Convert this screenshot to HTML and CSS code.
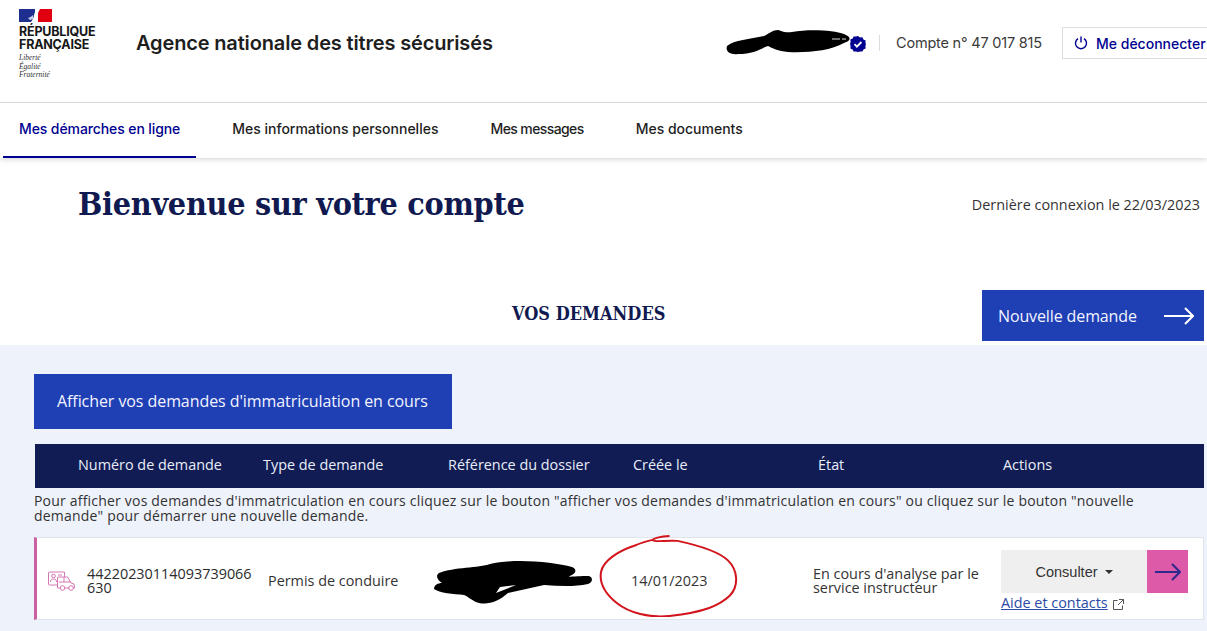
FILE: index.html
```html
<!DOCTYPE html>
<html lang="fr">
<head>
<meta charset="utf-8">
<title>Agence nationale des titres sécurisés</title>
<link rel="stylesheet" href="styles.css">
</head>
<body>
<header class="top">
  <div class="brand">
    <svg class="flag" width="33" height="13" viewBox="0 0 33 13"><rect width="33" height="13" fill="#fff"/><rect width="16" height="13" fill="#1f2f8f"/><path d="M19 13V0h14v13z" fill="#e1000f"/><path d="M12 13c2-3 3-5 3-7l2-6h4l-2 4-1 4-1 5z" fill="#fff"/><path d="M9 9c2-1 3-1 5-3v4l-3 1z" fill="#c9cfe8"/></svg>
    <div class="rf">RÉPUBLIQUE<br>FRANÇAISE</div>
    <div class="devise">Liberté<br>Égalité<br>Fraternité</div>
  </div>
  <div class="agency">Agence nationale des titres sécurisés</div>
  <div class="user">
    <div class="name">
      <svg class="scrib" width="128" height="26" viewBox="0 0 128 26"><path d="M1 17C8 11 24 10 38 7 44 4 47 1 52 1 56 2 58 4 66 3 82 0 108 1 118 5 125 8 126 11 118 14 104 22 80 24 62 23 52 22 46 19 42 17 36 19 28 25 12 25 5 26 -1 23 1 17z" fill="#000"/><path d="M106 10h8M116 10h4" stroke="#ddd" stroke-width="1"/></svg>
      <svg class="check" width="16" height="16" viewBox="0 0 16 16"><path d="M8 0l2 1.400 2.400-.2 1 2.200 2.200 1-.2 2.400L16 8l-.6 2 .2 2.400-2.200 1-1 2.200-2.400-.2L8 16l-2-.6-2.400.2-1-2.200-2.200-1 .2-2.400L0 8l.6-2-.2-2.400 2.200-1 1-2.200 2.400.2z" fill="#000091"/><path d="M4.500 8.200l2.400 2.400 4.500-4.600" fill="none" stroke="#fff" stroke-width="1.800"/></svg>
    </div>
    <div class="account">Compte n° 47 017 815</div>
    <div class="logout">
      <svg width="14" height="14" viewBox="0 0 14 14" fill="none" stroke="#000091" stroke-width="1.400"><path d="M4 2.600a5.500 5.500 0 1 0 6 0M7 0.500v6"/></svg>
      <span>Me déconnecter</span>
    </div>
  </div>
</header>
<nav class="menu">
  <a class="tab active">Mes démarches en ligne</a>
  <a class="tab">Mes informations personnelles</a>
  <a class="tab tight">Mes messages</a>
  <a class="tab">Mes documents</a>
</nav>
<div class="welcome">
  <h1>Bienvenue sur votre compte</h1>
  <p>Dernière connexion le 22/03/2023</p>
</div>
<div class="head">
  <h2>VOS DEMANDES</h2>
  <a class="new">Nouvelle demande
    <svg width="30" height="18" viewBox="0 0 30 18" fill="none" stroke="#fff" stroke-width="2"><path d="M0 9h29M21 1l8 8-8 8"/></svg>
  </a>
</div>
<main class="panel">
  <a class="show">Afficher vos demandes d'immatriculation en cours</a>
  <div class="thead">
    <span>Numéro de demande</span><span>Type de demande</span><span>Référence du dossier</span><span>Créée le</span><span>État</span><span>Actions</span>
  </div>
  <p class="info">Pour afficher vos demandes d'immatriculation en cours cliquez sur le bouton "afficher vos demandes d'immatriculation en cours" ou cliquez sur le bouton "nouvelle demande" pour démarrer une nouvelle demande.</p>
  <div class="row">
    <svg class="car" width="28" height="20" viewBox="0 0 28 20" fill="none" stroke="#d577b2" stroke-width="1"><path d="M9 14H1.500a1 1 0 0 1-1-1V2a1 1 0 0 1 1-1h15v5"/><circle cx="5.500" cy="5" r="1.800"/><path d="M2.500 11c0-2 1-3 3-3s3 1 3 3M10 4h4"/><path d="M12 17H9.500V7a1 1 0 0 1 1-1h9l3.500 6 3 1 .5 4h-1.500M17 17h4M11 11h12M16 6v5"/><circle cx="14.500" cy="17" r="2.300"/><circle cx="23" cy="17" r="2.300"/></svg>
    <div class="num">44220230114093739066 630</div>
    <div class="type">Permis de conduire</div>
    <div class="ref">
      <svg class="scrib2" width="160" height="46" viewBox="0 0 160 46"><path fill-rule="evenodd" d="M5 14C20 8 45 9 56 5 80-1 120 3 138 8 143 10 142 14 138 16 130 19 140 17 155 17 160 19 158 24 154 25 140 28 125 27 110 26L74 34C65 42 55 46 45 44 38 42 35 38 30 36 20 35 5 34 0 30 0 26 4 24 8 24 2 20 2 16 5 14ZM62 34 82 26 66 28Z" fill="#000"/></svg>
    </div>
    <div class="date">14/01/2023
      <svg class="circle" width="141" height="82" viewBox="0 0 140 84" preserveAspectRatio="none" fill="none" stroke="#d2141c" stroke-width="2"><path d="M70 1C60 1 54 4 53 5 56 8 66 5 78 6 96 10 118 16 128 26 138 36 139 52 130 62 120 72 105 79 70 83 50 85 30 80 18 70 6 60 0 50 2 38 4 26 20 16 35 11 42 8 48 6 53 5"/></svg>
    </div>
    <div class="state">En cours d'analyse par le service instructeur</div>
    <div class="actions">
      <div class="btns">
        <div class="consult">Consulter<i class="caret"></i></div>
        <div class="go"><svg width="26" height="18" viewBox="0 0 26 18" fill="none" stroke="#2d2a8f" stroke-width="2"><path d="M0 9h25M17 1l8 8-8 8"/></svg></div>
      </div>
      <a class="help">Aide et contacts</a>
      <svg class="ext" width="11" height="11" viewBox="0 0 11 11" fill="none" stroke="#555" stroke-width="1"><path d="M4.500 1.500H.5v9h9V6.500M6 .5h4.500V5M10.500 .5L5 6"/></svg>
    </div>
  </div>
</main>
</body>
</html>
```
FILE: styles.css
```css
* { box-sizing: border-box; }
html, body { margin: 0; height: 631px; overflow: hidden; background: #fff; }
body { font-family: "Open Sans", sans-serif; color: #2b2b2b; width: 1207px; }
.top { height: 103px; border-bottom: 1px solid #ddd; display: flex; align-items: flex-start; padding-left: 19px; }
.brand { width: 117px; padding-top: 9px; }
.flag { display: block; }
.rf { font-family: Inter, sans-serif; font-weight: 700; font-size: 12.500px; line-height: 13px; margin-top: 3px; color: #161616; letter-spacing: -.2px; }
.devise { font-family: "Liberation Serif", serif; font-style: italic; font-size: 7.500px; line-height: 8.500px; margin-top: 3px; color: #333; }
.agency { font-family: Inter, sans-serif; font-weight: 600; font-size: 20px; line-height: 26px; margin-top: 30px; color: #1e1e1e; letter-spacing: -.15px; }
.user { margin-left: auto; margin-top: 27px; display: flex; align-items: center; height: 32px; }
.name { display: flex; align-items: center; width: 154px; height: 32px; }
.scrib { margin-top: -3px; }
.check { margin-left: -4px; margin-top: 1px; }
.account { font-family: Inter, sans-serif; font-size: 14.500px; color: #3a3a3a; border-left: 1px solid #ddd; height: 16px; line-height: 16px; padding-left: 16px; margin-left: -1px; width: 183px; letter-spacing: -.2px; }
.logout { display: flex; align-items: center; gap: 8px; width: 145px; height: 32px; border: 1px solid #ddd; border-right: 0; padding-left: 11px; font-family: Inter, sans-serif; font-weight: 500; font-size: 14px; color: #000091; white-space: nowrap; }
.menu { height: 55px; display: flex; padding-left: 3px; box-shadow: 0 2px 5px rgba(0,0,0,.14); }
.tab { padding: 0 16px; margin-right: 20px; height: 55px; line-height: 51px; font-family: Inter, sans-serif; font-weight: 500; font-size: 14px; color: #1e1e1e; }
.tab.tight { letter-spacing: -.6px; }
.tab.active { color: #000091; border-bottom: 2px solid #000091; letter-spacing: -.1px; }
.welcome { display: flex; justify-content: space-between; padding: 24px 7px 0 78px; height: 132px; }
.welcome h1 { margin: 0; font-family: "DejaVu Serif Condensed", "DejaVu Serif", serif; font-weight: 700; font-size: 32px; line-height: 44px; color: #111a50; letter-spacing: -.28px; }
.welcome p { margin: 13px 0 0; font-size: 14.400px; line-height: 19px; color: #333; }
.head { height: 55px; position: relative; display: flex; justify-content: flex-end; padding-right: 3px; }
.head h2 { position: absolute; left: 512px; top: 12px; margin: 0; font-family: "DejaVu Serif Condensed", "DejaVu Serif", serif; font-weight: 700; font-size: 18px; line-height: 24px; color: #111a50; letter-spacing: 0; }
.new { display: flex; align-items: center; justify-content: space-between; width: 222px; height: 51px; padding: 0 10px 0 16px; background: #1f3fb5; color: #f2f4ff; font-size: 16px; letter-spacing: -.12px; }
.panel { background: #eef2fb; height: 286px; padding: 29px 3px 0 34px; }
.show { display: block; width: 418px; height: 55px; line-height: 54px; padding-left: 23px; background: #1f3fb5; color: #f2f4ff; font-size: 16px; letter-spacing: -.075px; white-space: nowrap; }
.thead { margin: 15px 0 0 1px; height: 44px; padding: 0 0 3px 43px; background: #111c54; color: #e9edf8; display: grid; grid-template-columns: 185px 185px 185px 185px 185px 1fr; align-items: center; font-size: 14.400px; }
.info { margin: 5px 0 0; font-size: 14px; line-height: 15px; letter-spacing: .2px; color: #333; width: 1130px; }
.row { margin-top: 14px; height: 83px; padding-top: 4px; background: #fff; border: 1px solid #dfe3ec; border-left: 3px solid #c9609f; display: flex; align-items: center; font-size: 14.400px; color: #333; position: relative; }
.car { margin-left: 11px; flex: none; }
.num { margin-left: 11px; width: 170px; line-height: 14px; word-break: break-all; color: #2b2b2b; }
.type { margin-left: 11px; width: 161px; }
.ref { width: 170px; position: relative; height: 50px; }
.scrib2 { position: absolute; left: 5px; top: 3px; }
.date { width: 218px; position: relative; padding-left: 36px; margin-left: -4px; }
.circle { position: absolute; left: 4px; top: -36px; }
.state { width: 188px; line-height: 14px; margin-top: 1px; padding-right: 15px; }
.actions { width: 195px; margin-top: 1px; }
.btns { display: flex; width: 187px; height: 43px; }
.consult { width: 146px; background: #efefef; display: flex; align-items: center; justify-content: center; gap: 7px; font-family: "Liberation Sans", sans-serif; font-size: 14.500px; }
.caret { width: 0; height: 0; border: 4px solid transparent; border-top-color: #333; border-bottom: 0; }
.go { width: 41px; background: #dc5aa8; display: flex; align-items: center; justify-content: center; }
.help { font-size: 14.400px; line-height: 19px; color: #2b4aa5; text-decoration: underline; }
.ext { margin-left: 2px; vertical-align: -2px; }
```
